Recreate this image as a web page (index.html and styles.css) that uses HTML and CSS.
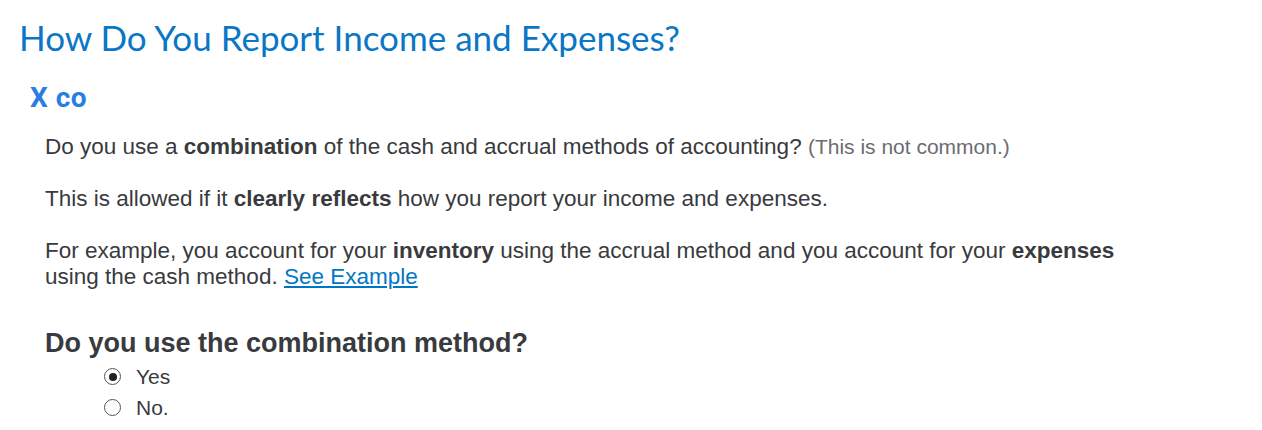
FILE: index.html
```html
<!DOCTYPE html>
<html>
<head>
<meta charset="utf-8">
<link rel="stylesheet" href="styles.css">
</head>
<body>
<main class="page">
  <h1 class="title">How Do You Report Income and Expenses?</h1>
  <h2 class="company">X co</h2>
  <section class="content">
    <p>Do you use a <b>combination</b> of the cash and accrual methods of accounting? <span class="note">(This is not common.)</span></p>
    <p>This is allowed if it <b>clearly reflects</b> how you report your income and expenses.</p>
    <p>For example, you account for your <b>inventory</b> using the accrual method and you account for your <b>expenses</b><br>using the cash method. <a href="#" class="link">See Example</a></p>
    <h3 class="question">Do you use the combination method?</h3>
    <div class="options">
      <label class="option"><span class="radio checked"></span>Yes</label>
      <label class="option"><span class="radio"></span>No.</label>
    </div>
  </section>
</main>
</body>
</html>
```
FILE: styles.css
```css
html, body {
  margin: 0;
  padding: 0;
  background: #fff;
}
.page {
  padding: 16px 0 0 19px;
}
.title {
  margin: 0;
  font-family: "Lato", "Open Sans", sans-serif;
  font-weight: 400;
  font-size: 35px;
  line-height: 42px;
  color: #0a77c6;
}
.company {
  margin: 23px 0 0 11px;
  font-family: "Roboto", sans-serif;
  font-weight: 700;
  font-size: 28px;
  line-height: 34px;
  letter-spacing: 0.5px;
  color: #2a7de1;
}
.content {
  padding-left: 26px;
  margin-top: 19px;
  font-family: "Liberation Sans", Arial, sans-serif;
  font-size: 22.5px;
  line-height: 26px;
  color: #393a3d;
}
.content p {
  margin: 0 0 26px 0;
}
.content b {
  font-weight: 700;
}
.note {
  font-size: 21px;
  line-height: 20px;
  color: #6b6c72;
}
.link {
  color: #0077c5;
  text-decoration: underline;
}
.question {
  margin: 37px 0 0 0;
  font-size: 27px;
  line-height: 32px;
  font-weight: 700;
  color: #393a3d;
}
.options {
  display: flex;
  flex-direction: column;
  padding-left: 59px;
  margin-top: 2px;
}
.option {
  display: flex;
  align-items: center;
  gap: 15px;
  font-size: 21px;
  line-height: 31px;
  color: #393a3d;
}
.radio {
  width: 17px;
  height: 17px;
  border: 1px solid #555;
  border-radius: 50%;
  box-sizing: border-box;
  position: relative;
  background: #fff;
}
.radio.checked::after {
  content: "";
  position: absolute;
  left: 3.5px;
  top: 3.5px;
  width: 8px;
  height: 8px;
  border-radius: 50%;
  background: #222;
}
```
